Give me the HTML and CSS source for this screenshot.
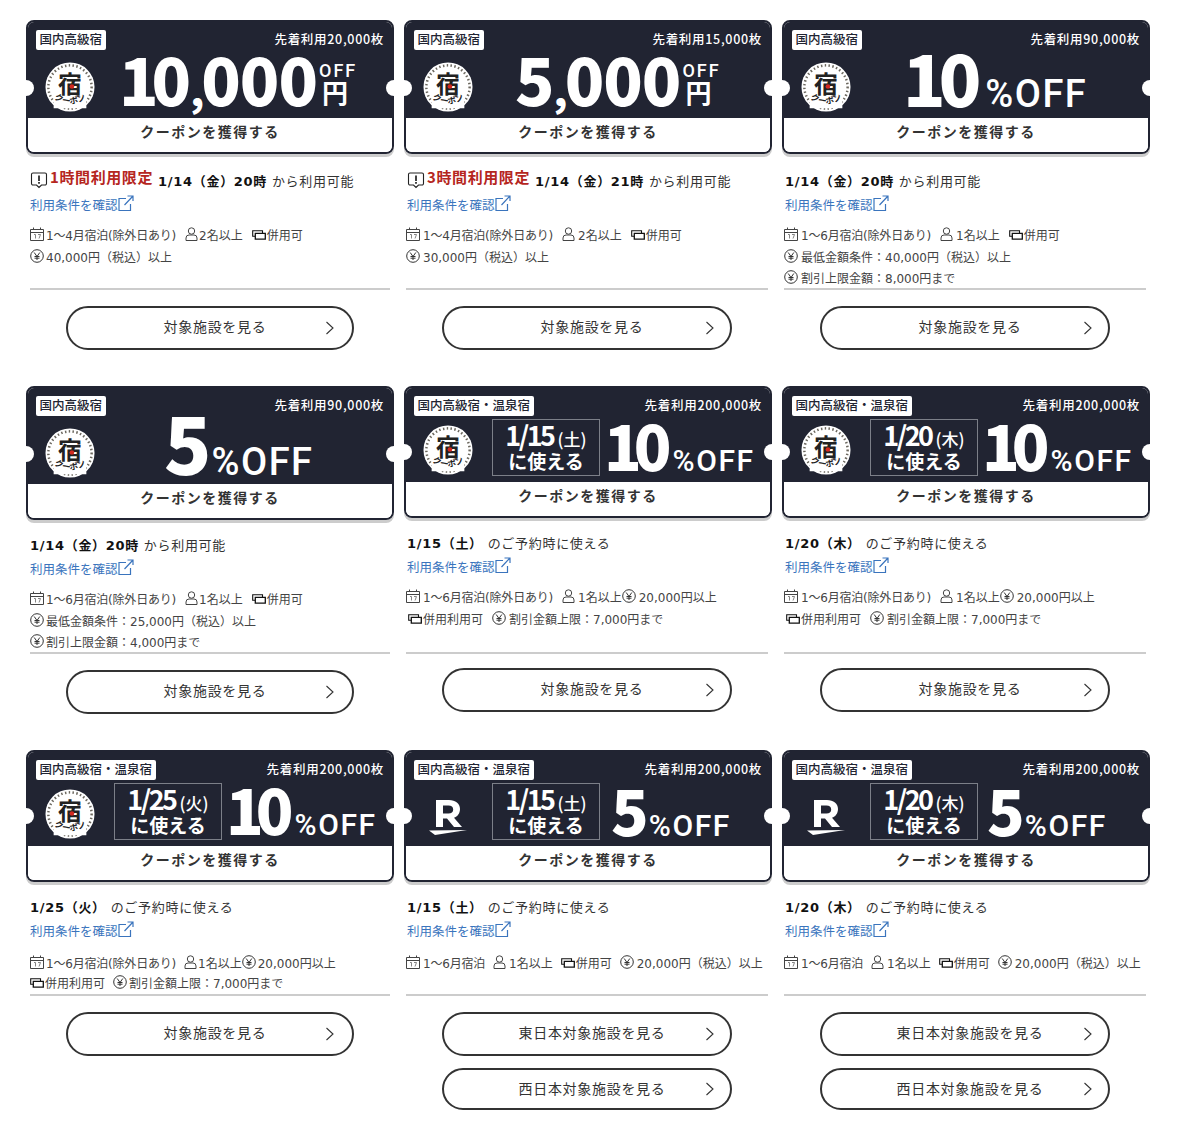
FILE: index.html
```html
<!DOCTYPE html>
<html lang="ja">
<head>
  <meta charset="UTF-8">
  <title>クーポン一覧</title>
  <link rel="stylesheet" href="styles.css">
</head>
<body>

  <svg class="defs" width="0" height="0">
    <path id="seal-arc" d="M8 37 Q26 50 44 37" fill="none"/>
    <symbol id="i-seal" viewBox="0 0 52 52">
      <circle cx="26" cy="26" r="25.5" fill="#fff"/>
      <circle cx="26" cy="26" r="22.500" fill="none" stroke="#6b675e" stroke-width="2.600" stroke-dasharray="1.500 2.500"/>
      <path d="M9 34h34v14H9z" fill="#fff"/>
      <text x="26" y="32" text-anchor="middle" class="seal-kanji">宿</text>
      <circle cx="28" cy="25.500" r="2.400" fill="#d3291f"/>
      <text class="seal-kana"><textPath href="#seal-arc" startOffset="50%" text-anchor="middle">クーポン</textPath></text>
    </symbol>
    <symbol id="i-r" viewBox="0 0 40 46">
      <path d="M8 2h13c6.500 0 11 3.500 11 9 0 4.500-2.500 7.500-6 8.800L34 29h-8l-7-8.500h-4V29H8zM15 7.500v8h5.500c3 0 4.700-1.600 4.700-4 0-2.500-1.700-4-4.700-4z" fill="#fff"/>
      <path d="M1 32.500 39 32 7 37z" fill="#fff"/>
    </symbol>
    <symbol id="i-warn" viewBox="0 0 18 18">
      <path d="M3 2h12a1.500 1.500 0 0 1 1.500 1.500v9A1.500 1.500 0 0 1 15 14h-3.500L9 16.500 6.500 14H3a1.500 1.500 0 0 1-1.500-1.500v-9A1.500 1.500 0 0 1 3 2z" fill="none" stroke="#222" stroke-width="1.100"/>
      <path d="M9 4.500v5.500M9 11v1.800" stroke="#222" stroke-width="1.700" fill="none"/>
    </symbol>
    <symbol id="i-ext" viewBox="0 0 16 16">
      <path d="M8 3.500H1v12h11.500V9M6.500 10 15 1M9.500 1H15v5" fill="none" stroke="#3a74bd" stroke-width="1.200"/>
    </symbol>
    <symbol id="i-cal" viewBox="0 0 14 14">
      <path d="M.5 2.500h13v11H.5zM.5 5.500h13M3.500 .5v2M10.500 .5v2" fill="none" stroke="#444" stroke-width="1"/>
      <path d="M4 7.500h1.500v4M8 7.500h2.500L9 11.500" fill="none" stroke="#777" stroke-width=".9"/>
    </symbol>
    <symbol id="i-user" viewBox="0 0 13 14">
      <circle cx="6.500" cy="4" r="3.200" fill="none" stroke="#444" stroke-width="1"/>
      <path d="M1 13.500v-2.500a3 3 0 0 1 3-3h5a3 3 0 0 1 3 3v2.500z" fill="none" stroke="#444" stroke-width="1"/>
    </symbol>
    <symbol id="i-ticket" viewBox="0 0 14 10">
      <path d="M10.500 3V.7H.7v5.600h2.500" fill="none" stroke="#111" stroke-width="1.100"/>
      <path d="M3.300 3.300h10v5.800h-10z" fill="none" stroke="#111" stroke-width="1.300"/>
    </symbol>
    <symbol id="i-yen" viewBox="0 0 14 14">
      <circle cx="7" cy="7" r="6.300" fill="none" stroke="#333" stroke-width="1"/>
      <path d="M4.200 3.500 7 7.500l2.800-4M7 7.500v3.500M4.500 7.500h5M4.500 9.200h5" fill="none" stroke="#333" stroke-width="1"/>
    </symbol>
    <symbol id="i-chev" viewBox="0 0 10 14">
      <path d="M1.500 1 8 7l-6.500 6" fill="none" stroke="#333" stroke-width="1.100"/>
    </symbol>
  </svg>

  <div class="coupons">

    <section class="coupon coupon-tall">
      <div class="ticket ticket-tall">
        <div class="ticket-top">
          <div class="ticket-head"><span class="tag">国内高級宿</span><span class="limit">先着利用20,000枚</span></div>
          <div class="ticket-main">
            <svg class="seal"><use href="#i-seal"/></svg>
            <div class="price price-yen"><span class="num"><em>1</em>0<i>,</i>000</span><span class="unit"><b>OFF</b><b>円</b></span></div>
          </div>
        </div>
        <div class="ticket-get">クーポンを獲得する</div>
      </div>
      <div class="info">
        <p class="when"><svg class="ic-warn"><use href="#i-warn"/></svg><strong class="hurry">1時間利用限定</strong><b>1/14（金）20時</b> から利用可能</p>
        <a class="terms" href="#">利用条件を確認<svg class="ic-ext"><use href="#i-ext"/></svg></a>
        <ul class="conds">
          <li><span class="cond"><svg class="ic"><use href="#i-cal"/></svg>1〜4月宿泊(除外日あり)</span><span class="cond gap"><svg class="ic ic-u"><use href="#i-user"/></svg>2名以上</span><span class="cond gap"><svg class="ic-t"><use href="#i-ticket"/></svg>併用可</span></li>
          <li><span class="cond"><svg class="ic"><use href="#i-yen"/></svg>40,000円（税込）以上</span></li>
        </ul>
      </div>
      <div class="links"><a class="more" href="#">対象施設を見る<svg class="chev"><use href="#i-chev"/></svg></a></div>
    </section>

    <section class="coupon coupon-tall">
      <div class="ticket ticket-tall">
        <div class="ticket-top">
          <div class="ticket-head"><span class="tag">国内高級宿</span><span class="limit">先着利用15,000枚</span></div>
          <div class="ticket-main">
            <svg class="seal"><use href="#i-seal"/></svg>
            <div class="price price-yen price-5k"><span class="num">5<i>,</i>000</span><span class="unit"><b>OFF</b><b>円</b></span></div>
          </div>
        </div>
        <div class="ticket-get">クーポンを獲得する</div>
      </div>
      <div class="info">
        <p class="when"><svg class="ic-warn"><use href="#i-warn"/></svg><strong class="hurry">3時間利用限定</strong><b>1/14（金）21時</b> から利用可能</p>
        <a class="terms" href="#">利用条件を確認<svg class="ic-ext"><use href="#i-ext"/></svg></a>
        <ul class="conds">
          <li><span class="cond"><svg class="ic"><use href="#i-cal"/></svg>1〜4月宿泊(除外日あり)</span><span class="cond gap"><svg class="ic ic-u"><use href="#i-user"/></svg>2名以上</span><span class="cond gap"><svg class="ic-t"><use href="#i-ticket"/></svg>併用可</span></li>
          <li><span class="cond"><svg class="ic"><use href="#i-yen"/></svg>30,000円（税込）以上</span></li>
        </ul>
      </div>
      <div class="links"><a class="more" href="#">対象施設を見る<svg class="chev"><use href="#i-chev"/></svg></a></div>
    </section>

    <section class="coupon coupon-tall">
      <div class="ticket ticket-tall">
        <div class="ticket-top">
          <div class="ticket-head"><span class="tag">国内高級宿</span><span class="limit">先着利用90,000枚</span></div>
          <div class="ticket-main">
            <svg class="seal"><use href="#i-seal"/></svg>
            <div class="price price-pct price-ten"><span class="num"><em>1</em>0</span><span class="pct">%OFF</span></div>
          </div>
        </div>
        <div class="ticket-get">クーポンを獲得する</div>
      </div>
      <div class="info">
        <p class="when"><b>1/14（金）20時</b> から利用可能</p>
        <a class="terms" href="#">利用条件を確認<svg class="ic-ext"><use href="#i-ext"/></svg></a>
        <ul class="conds">
          <li><span class="cond"><svg class="ic"><use href="#i-cal"/></svg>1〜6月宿泊(除外日あり)</span><span class="cond gap"><svg class="ic ic-u"><use href="#i-user"/></svg>1名以上</span><span class="cond gap"><svg class="ic-t"><use href="#i-ticket"/></svg>併用可</span></li>
          <li><span class="cond"><svg class="ic"><use href="#i-yen"/></svg>最低金額条件：40,000円（税込）以上</span></li>
          <li class="short"><span class="cond"><svg class="ic"><use href="#i-yen"/></svg>割引上限金額：8,000円まで</span></li>
        </ul>
      </div>
      <div class="links"><a class="more" href="#">対象施設を見る<svg class="chev"><use href="#i-chev"/></svg></a></div>
    </section>

    <section class="coupon coupon-mid">
      <div class="ticket ticket-tall">
        <div class="ticket-top">
          <div class="ticket-head"><span class="tag">国内高級宿</span><span class="limit">先着利用90,000枚</span></div>
          <div class="ticket-main">
            <svg class="seal"><use href="#i-seal"/></svg>
            <div class="price price-pct price-big"><span class="num">5</span><span class="pct">%OFF</span></div>
          </div>
        </div>
        <div class="ticket-get">クーポンを獲得する</div>
      </div>
      <div class="info">
        <p class="when"><b>1/14（金）20時</b> から利用可能</p>
        <a class="terms" href="#">利用条件を確認<svg class="ic-ext"><use href="#i-ext"/></svg></a>
        <ul class="conds">
          <li><span class="cond"><svg class="ic"><use href="#i-cal"/></svg>1〜6月宿泊(除外日あり)</span><span class="cond gap"><svg class="ic ic-u"><use href="#i-user"/></svg>1名以上</span><span class="cond gap"><svg class="ic-t"><use href="#i-ticket"/></svg>併用可</span></li>
          <li><span class="cond"><svg class="ic"><use href="#i-yen"/></svg>最低金額条件：25,000円（税込）以上</span></li>
          <li class="short"><span class="cond"><svg class="ic"><use href="#i-yen"/></svg>割引上限金額：4,000円まで</span></li>
        </ul>
      </div>
      <div class="links"><a class="more" href="#">対象施設を見る<svg class="chev"><use href="#i-chev"/></svg></a></div>
    </section>

    <section class="coupon coupon-mid">
      <div class="ticket">
        <div class="ticket-top">
          <div class="ticket-head"><span class="tag">国内高級宿・温泉宿</span><span class="limit">先着利用200,000枚</span></div>
          <div class="ticket-main">
            <svg class="seal"><use href="#i-seal"/></svg>
            <div class="dated"><span class="dated-day">1/15<small>(土)</small></span><span class="dated-use">に使える</span></div>
            <div class="price price-pct"><span class="num"><em>1</em>0</span><span class="pct">%OFF</span></div>
          </div>
        </div>
        <div class="ticket-get">クーポンを獲得する</div>
      </div>
      <div class="info">
        <p class="when"><b>1/15（土）</b> のご予約時に使える</p>
        <a class="terms" href="#">利用条件を確認<svg class="ic-ext"><use href="#i-ext"/></svg></a>
        <ul class="conds">
          <li><span class="cond"><svg class="ic"><use href="#i-cal"/></svg>1〜6月宿泊(除外日あり)</span><span class="cond gap"><svg class="ic ic-u"><use href="#i-user"/></svg>1名以上</span><span class="cond"><svg class="ic"><use href="#i-yen"/></svg>20,000円以上</span></li>
          <li><span class="cond"><svg class="ic-t"><use href="#i-ticket"/></svg>併用利用可</span><span class="cond gap"><svg class="ic"><use href="#i-yen"/></svg>割引金額上限：7,000円まで</span></li>
        </ul>
      </div>
      <div class="links"><a class="more" href="#">対象施設を見る<svg class="chev"><use href="#i-chev"/></svg></a></div>
    </section>

    <section class="coupon coupon-mid">
      <div class="ticket">
        <div class="ticket-top">
          <div class="ticket-head"><span class="tag">国内高級宿・温泉宿</span><span class="limit">先着利用200,000枚</span></div>
          <div class="ticket-main">
            <svg class="seal"><use href="#i-seal"/></svg>
            <div class="dated"><span class="dated-day">1/20<small>(木)</small></span><span class="dated-use">に使える</span></div>
            <div class="price price-pct"><span class="num"><em>1</em>0</span><span class="pct">%OFF</span></div>
          </div>
        </div>
        <div class="ticket-get">クーポンを獲得する</div>
      </div>
      <div class="info">
        <p class="when"><b>1/20（木）</b> のご予約時に使える</p>
        <a class="terms" href="#">利用条件を確認<svg class="ic-ext"><use href="#i-ext"/></svg></a>
        <ul class="conds">
          <li><span class="cond"><svg class="ic"><use href="#i-cal"/></svg>1〜6月宿泊(除外日あり)</span><span class="cond gap"><svg class="ic ic-u"><use href="#i-user"/></svg>1名以上</span><span class="cond"><svg class="ic"><use href="#i-yen"/></svg>20,000円以上</span></li>
          <li><span class="cond"><svg class="ic-t"><use href="#i-ticket"/></svg>併用利用可</span><span class="cond gap"><svg class="ic"><use href="#i-yen"/></svg>割引金額上限：7,000円まで</span></li>
        </ul>
      </div>
      <div class="links"><a class="more" href="#">対象施設を見る<svg class="chev"><use href="#i-chev"/></svg></a></div>
    </section>

    <section class="coupon coupon-low">
      <div class="ticket">
        <div class="ticket-top">
          <div class="ticket-head"><span class="tag">国内高級宿・温泉宿</span><span class="limit">先着利用200,000枚</span></div>
          <div class="ticket-main">
            <svg class="seal"><use href="#i-seal"/></svg>
            <div class="dated"><span class="dated-day">1/25<small>(火)</small></span><span class="dated-use">に使える</span></div>
            <div class="price price-pct"><span class="num"><em>1</em>0</span><span class="pct">%OFF</span></div>
          </div>
        </div>
        <div class="ticket-get">クーポンを獲得する</div>
      </div>
      <div class="info">
        <p class="when"><b>1/25（火）</b> のご予約時に使える</p>
        <a class="terms" href="#">利用条件を確認<svg class="ic-ext"><use href="#i-ext"/></svg></a>
        <ul class="conds">
          <li><span class="cond"><svg class="ic"><use href="#i-cal"/></svg>1〜6月宿泊(除外日あり)</span><span class="cond gap"><svg class="ic ic-u"><use href="#i-user"/></svg>1名以上</span><span class="cond"><svg class="ic"><use href="#i-yen"/></svg>20,000円以上</span></li>
          <li><span class="cond"><svg class="ic-t"><use href="#i-ticket"/></svg>併用利用可</span><span class="cond gap"><svg class="ic"><use href="#i-yen"/></svg>割引金額上限：7,000円まで</span></li>
        </ul>
      </div>
      <div class="links"><a class="more" href="#">対象施設を見る<svg class="chev"><use href="#i-chev"/></svg></a></div>
    </section>

    <section class="coupon coupon-low">
      <div class="ticket">
        <div class="ticket-top">
          <div class="ticket-head"><span class="tag">国内高級宿・温泉宿</span><span class="limit">先着利用200,000枚</span></div>
          <div class="ticket-main">
            <svg class="logo-r"><use href="#i-r"/></svg>
            <div class="dated"><span class="dated-day">1/15<small>(土)</small></span><span class="dated-use">に使える</span></div>
            <div class="price price-pct price-five"><span class="num">5</span><span class="pct">%OFF</span></div>
          </div>
        </div>
        <div class="ticket-get">クーポンを獲得する</div>
      </div>
      <div class="info">
        <p class="when"><b>1/15（土）</b> のご予約時に使える</p>
        <a class="terms" href="#">利用条件を確認<svg class="ic-ext"><use href="#i-ext"/></svg></a>
        <ul class="conds">
          <li><span class="cond"><svg class="ic"><use href="#i-cal"/></svg>1〜6月宿泊</span><span class="cond gap"><svg class="ic ic-u"><use href="#i-user"/></svg>1名以上</span><span class="cond gap"><svg class="ic-t"><use href="#i-ticket"/></svg>併用可</span><span class="cond gap"><svg class="ic"><use href="#i-yen"/></svg>20,000円（税込）以上</span></li>
        </ul>
      </div>
      <div class="links">
        <a class="more" href="#">東日本対象施設を見る<svg class="chev"><use href="#i-chev"/></svg></a>
        <a class="more" href="#">西日本対象施設を見る<svg class="chev"><use href="#i-chev"/></svg></a>
      </div>
    </section>

    <section class="coupon coupon-low">
      <div class="ticket">
        <div class="ticket-top">
          <div class="ticket-head"><span class="tag">国内高級宿・温泉宿</span><span class="limit">先着利用200,000枚</span></div>
          <div class="ticket-main">
            <svg class="logo-r"><use href="#i-r"/></svg>
            <div class="dated"><span class="dated-day">1/20<small>(木)</small></span><span class="dated-use">に使える</span></div>
            <div class="price price-pct price-five"><span class="num">5</span><span class="pct">%OFF</span></div>
          </div>
        </div>
        <div class="ticket-get">クーポンを獲得する</div>
      </div>
      <div class="info">
        <p class="when"><b>1/20（木）</b> のご予約時に使える</p>
        <a class="terms" href="#">利用条件を確認<svg class="ic-ext"><use href="#i-ext"/></svg></a>
        <ul class="conds">
          <li><span class="cond"><svg class="ic"><use href="#i-cal"/></svg>1〜6月宿泊</span><span class="cond gap"><svg class="ic ic-u"><use href="#i-user"/></svg>1名以上</span><span class="cond gap"><svg class="ic-t"><use href="#i-ticket"/></svg>併用可</span><span class="cond gap"><svg class="ic"><use href="#i-yen"/></svg>20,000円（税込）以上</span></li>
        </ul>
      </div>
      <div class="links">
        <a class="more" href="#">東日本対象施設を見る<svg class="chev"><use href="#i-chev"/></svg></a>
        <a class="more" href="#">西日本対象施設を見る<svg class="chev"><use href="#i-chev"/></svg></a>
      </div>
    </section>

  </div>

</body>
</html>
```

FILE: styles.css
```css
body {
  margin: 0;
  background-color: #fff;
  color: #333;
  font-family: "DejaVu Sans", "Noto Sans CJK JP", sans-serif;
}

.defs {
  position: absolute;
}

.coupons {
  display: grid;
  grid-template-columns: repeat(3, 368px);
  column-gap: 10px;
  padding: 20px 0 0 26px;
}

.coupon {
  display: flex;
  flex-direction: column;
}

.coupon-tall { height: 366px; }
.coupon-mid { height: 364px; }

/* ticket */

.ticket {
  position: relative;
  flex: none;
  border: 2px solid #212432;
  border-radius: 8px;
  box-shadow: 0 3px 0 #ccc;
  height: 128px;
  display: flex;
  flex-direction: column;
}

.ticket-tall {
  height: 130px;
}

.ticket::before,
.ticket::after {
  content: "";
  position: absolute;
  top: 56px;
  width: 16px;
  height: 16px;
  border-radius: 50%;
  background-color: #fff;
}

.ticket-tall::before,
.ticket-tall::after {
  top: 58px;
}

.ticket::before { left: -10px; }
.ticket::after { right: -10px; }

.ticket-top {
  flex: 1;
  background-color: #212432;
  border-radius: 6px 6px 0 0;
  color: #fff;
  padding: 8px 8px 0 8px;
  font-family: "Noto Sans CJK JP", sans-serif;
}

.ticket-head {
  display: flex;
  justify-content: space-between;
  align-items: flex-start;
}

.tag {
  background-color: #fff;
  color: #212432;
  border-radius: 2px;
  font-size: 12.500px;
  font-weight: 500;
  line-height: 18px;
  height: 20px;
  padding: 0 3.500px;
}

.limit {
  font-size: 12.500px;
  font-weight: 500;
  letter-spacing: .7px;
  line-height: 18px;
}

.ticket-main {
  display: flex;
  align-items: center;
  margin-top: 4px;
  height: 60px;
}

.ticket-tall .ticket-main {
  margin-top: 7px;
}

.seal {
  width: 50px;
  height: 50px;
  margin-left: 9px;
  flex: none;
}

.seal-kanji {
  font: 700 25px "Noto Sans CJK JP", sans-serif;
  fill: #222;
}

.seal-kana {
  font: 700 9px "Noto Sans CJK JP", sans-serif;
  fill: #222;
}

.logo-r {
  width: 40px;
  height: 46px;
  margin: 14px 0 0 14px;
  flex: none;
}

.price {
  display: flex;
  align-items: baseline;
  line-height: 1;
}

.num {
  font-family: "Noto Sans CJK JP", sans-serif;
  font-weight: 900;
  font-size: 62px;
}

.num em {
  font-style: normal;
  letter-spacing: -8px;
}

.num i {
  font-style: normal;
  font-size: 40px;
  letter-spacing: -3px;
}

.pct {
  font-family: "Roboto", sans-serif;
  font-weight: 500;
  font-size: 30px;
  letter-spacing: 1.600px;
  margin-left: 1px;
}

.price-yen {
  margin: 0 0 18px 24px;
}

.price-5k {
  margin-left: 42px;
}

.price-yen .num {
  font-size: 65px;
  letter-spacing: -1px;
}

.price-yen .num em {
  letter-spacing: -7px;
}

.unit {
  display: flex;
  flex-direction: column;
  align-self: flex-end;
  font-family: "Roboto", sans-serif;
  font-size: 18px;
  font-weight: 500;
  letter-spacing: 2px;
  line-height: 15px;
  margin: 0 0 5px 2px;
}

.unit b {
  font-weight: 500;
}

.unit b:last-child {
  font-family: "Noto Sans CJK JP", sans-serif;
  font-size: 26px;
  font-weight: 700;
  letter-spacing: 0;
  line-height: 28px;
  margin-left: 3px;
}

.price-pct {
  margin: 0 0 11px 4px;
}

.price-ten {
  margin: 0 0 20px 52px;
}

.price-ten .num {
  font-size: 70px;
}

.price-ten .num em {
  letter-spacing: -7px;
}

.price-big {
  margin: 0 0 24px 69px;
}

.price-big .num {
  font-size: 78px;
}

.price-ten .pct,
.price-big .pct {
  font-size: 38px;
  letter-spacing: 1.500px;
  margin-left: 4px;
}

.price-big .pct {
  margin-left: 0;
}

.price-five {
  margin: 0 0 10px 11px;
}

.price-five .pct {
  margin-left: 0;
}

.coupon:last-child .price-five {
  margin-left: 9px;
}

.dated {
  display: flex;
  flex-direction: column;
  align-items: center;
  justify-content: center;
  box-sizing: border-box;
  width: 108px;
  height: 57px;
  margin: 0 0 5px 19px;
  border: 1px solid #7c7f88;
  font-weight: 700;
  flex: none;
}

.logo-r + .dated {
  margin-left: 24px;
}

.dated-day {
  font-size: 27px;
  line-height: 22px;
  letter-spacing: -2.500px;
}

.dated-day small {
  font-size: 17px;
  font-weight: 500;
  letter-spacing: 0;
  margin-left: 4px;
}

.dated-use {
  font-size: 19px;
  line-height: 21px;
}

.ticket-get {
  flex: none;
  height: 34px;
  background-color: #fff;
  border-radius: 0 0 6px 6px;
  color: #333;
  font-family: "Noto Sans CJK JP", sans-serif;
  font-size: 14px;
  font-weight: 700;
  letter-spacing: 1.500px;
  line-height: 26px;
  text-align: center;
}

/* details */

.info {
  flex: none;
  box-sizing: border-box;
  height: 134px;
  margin: 0 4px 0 2px;
  padding-top: 14px;
  border-bottom: 2px solid #ccc;
  font-size: 12px;
}

.coupon-tall .info {
  height: 136px;
  padding-top: 16px;
}

.coupon-mid .ticket:not(.ticket-tall) + .info {
  height: 136px;
}

.coupon-low .info {
  height: 114px;
}

.coupon:nth-child(3n+1) .info {
  margin-left: 4px;
}

.when {
  display: flex;
  align-items: center;
  margin: 0;
  height: 20px;
  font-size: 13px;
  letter-spacing: .7px;
  white-space: pre;
}

.when b {
  font-weight: 700;
  color: #111;
}

.ic-warn {
  width: 18px;
  height: 18px;
  margin-right: 2px;
  flex: none;
}

.hurry {
  color: #b5261e;
  font-size: 15px;
  font-weight: 700;
  font-family: "Noto Sans CJK JP", sans-serif;
  letter-spacing: .6px;
  margin: 0 5px 7px 0;
}

.terms {
  display: flex;
  align-items: center;
  margin-top: 4px;
  height: 20px;
  color: #3a74bd;
  font-size: 12.500px;
  text-decoration: none;
  white-space: nowrap;
}

.coupon:not(:nth-child(3n+1)) .when,
.coupon:not(:nth-child(3n+1)) .terms {
  margin-left: 1px;
}

.ic-ext {
  width: 16px;
  height: 16px;
  margin-top: -2px;
  flex: none;
}

.conds {
  list-style: none;
  margin: 9px 0 0 0;
  padding: 0;
  color: #444;
}

.coupon-low .conds {
  margin-top: 12px;
}

.conds li {
  display: flex;
  align-items: center;
  height: 22px;
  white-space: nowrap;
}

.conds li.short,
.coupon-low .conds li {
  height: 20px;
}

.conds li:first-child .cond:first-child {
  letter-spacing: -.2px;
}

.cond {
  display: flex;
  align-items: center;
}

.cond.gap {
  margin-left: 9px;
}

.coupon-low .cond.gap {
  margin-left: 8px;
}

.ic {
  width: 14px;
  height: 14px;
  margin-right: 2px;
  flex: none;
}

.coupon:not(:nth-child(3n+1)) .ic {
  margin-right: 3px;
}

.coupon .ic-u {
  width: 13px;
  margin-right: 1px;
}

.ic-t {
  width: 14px;
  height: 10px;
  margin: 2px 1px 0 0;
  flex: none;
}

.coupon:not(:nth-child(3n+1)) li:last-child > .cond:first-child .ic-t {
  margin-left: 2px;
}

/* links */

.links {
  display: flex;
  flex-direction: column;
  align-items: center;
  gap: 12px;
  margin-top: 16px;
  padding-right: 2px;
}

.coupon-mid .ticket:not(.ticket-tall) ~ .links {
  margin-top: 14px;
}

.coupon:nth-child(3n+1) .links {
  padding-right: 0;
}

.more {
  position: relative;
  display: block;
  box-sizing: border-box;
  width: 290px;
  height: 44px;
  padding-left: 10px;
  border: 2px solid #333;
  border-radius: 22px;
  color: #333;
  font-size: 14px;
  letter-spacing: .7px;
  line-height: 38px;
  text-align: center;
  text-decoration: none;
}

.more + .more {
  height: 42px;
}

.coupon:nth-child(3n+1) .more {
  width: 288px;
}

.chev {
  position: absolute;
  right: 15px;
  top: calc(50% - 7px);
  width: 10px;
  height: 14px;
}

.coupon:nth-child(3n+1) .chev {
  right: 17px;
}
```
